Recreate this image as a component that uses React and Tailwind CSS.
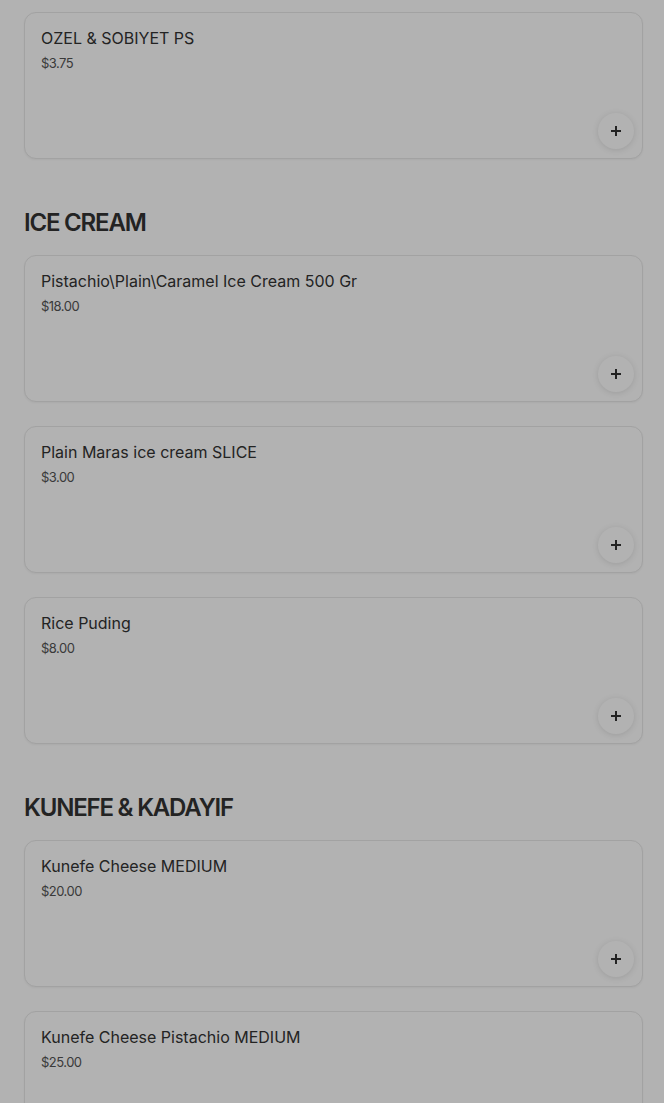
import React from "react";

const sections = [
  {
    title: null,
    items: [{ name: "OZEL & SOBIYET PS", price: "$3.75" }],
  },
  {
    title: "ICE CREAM",
    items: [
      { name: "Pistachio\\Plain\\Caramel Ice Cream 500 Gr", price: "$18.00" },
      { name: "Plain Maras ice cream SLICE", price: "$3.00" },
      { name: "Rice Puding", price: "$8.00" },
    ],
  },
  {
    title: "KUNEFE & KADAYIF",
    items: [
      { name: "Kunefe Cheese MEDIUM", price: "$20.00" },
      { name: "Kunefe Cheese Pistachio MEDIUM", price: "$25.00" },
    ],
  },
];

const PlusIcon = () => (
  <svg width="12" height="12" viewBox="0 0 12 12" fill="none">
    <path d="M6 1v10M1 6h10" stroke="#333" strokeWidth="2" />
  </svg>
);

const ItemCard = ({ item }) => (
  <div className="flex h-[147px] rounded-xl border border-[#e8e8e8] bg-white pl-4 pt-[15px] pr-2 pb-[9px] shadow-[0_1px_2px_rgba(0,0,0,0.05)]">
    <div className="flex-1">
      <p className="text-[16px] leading-5 text-[#333]">{item.name}</p>
      <p className="mt-[5px] text-[13px] leading-5 text-[#545454] tracking-[-0.04em]">
        {item.price}
      </p>
    </div>
    <button className="self-end flex h-9 w-9 items-center justify-center rounded-full bg-white shadow-[0_1px_6px_rgba(0,0,0,0.12)]">
      <PlusIcon />
    </button>
  </div>
);

export default function App() {
  return (
    <div
      className="relative min-h-[1103px] bg-white pl-6 pr-[21px] pt-3"
      style={{ fontFamily: "Inter, 'Noto Sans', sans-serif" }}
    >
      {sections.map((section, i) => (
        <section key={i} className={section.title ? "mt-[48px]" : ""}>
          {section.title && (
            <h2 className="mb-[16px] text-[24px] font-semibold leading-8 tracking-[-0.05em] text-[#333]">
              {section.title}
            </h2>
          )}
          <div className="flex flex-col gap-6">
            {section.items.map((item, j) => (
              <ItemCard key={j} item={item} />
            ))}
          </div>
        </section>
      ))}
      {/* modal backdrop */}
      <div className="fixed inset-0 bg-black/30"></div>
    </div>
  );
}
